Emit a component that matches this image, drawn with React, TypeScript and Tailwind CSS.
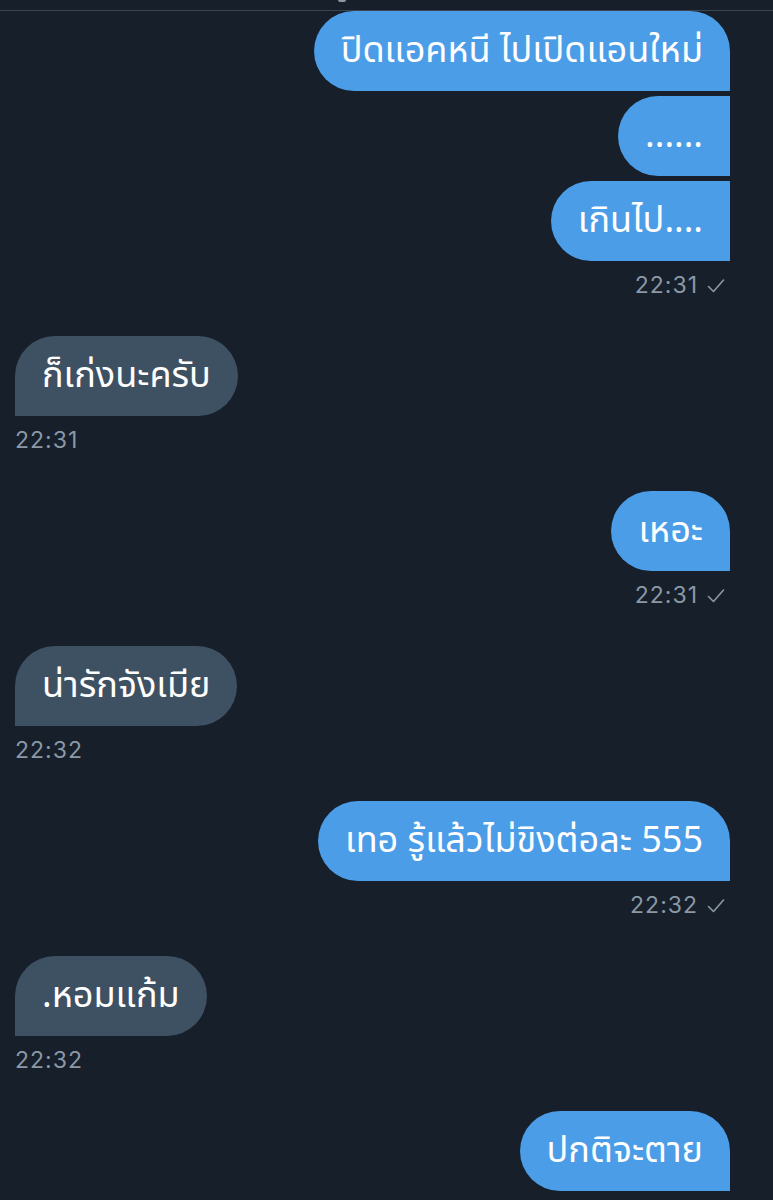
import React from "react";

type Msg = { texts: string[]; time: string; mine: boolean };

const msgs: Msg[] = [
  { texts: ["ปิดแอคหนี ไปเปิดแอนใหม่", "......", "เกินไป...."], time: "22:31", mine: true },
  { texts: ["ก็เก่งนะครับ"], time: "22:31", mine: false },
  { texts: ["เหอะ"], time: "22:31", mine: true },
  { texts: ["น่ารักจังเมีย"], time: "22:32", mine: false },
  { texts: ["เทอ รู้แล้วไม่ขิงต่อละ 555"], time: "22:32", mine: true },
  { texts: [".หอมแก้ม"], time: "22:32", mine: false },
  { texts: ["ปกติจะตาย"], time: "", mine: true },
];

function Check() {
  return (
    <svg width="18" height="14" viewBox="0 0 18 14" className="ml-[9px] mt-[1px]">
      <path d="M1.5 7.5 L6.5 12.5 L16.5 1" fill="none" stroke="#8b98a5" strokeWidth="1.6" strokeLinecap="round" strokeLinejoin="round" />
    </svg>
  );
}

export default function App() {
  return (
    <div
      className="w-[773px] h-[1200px] overflow-hidden bg-[#161f2a] flex flex-col"
      style={{ fontFamily: '"Noto Sans Thai", "Noto Sans", Inter, sans-serif' }}
    >
      <div className="h-[11px] shrink-0 border-b border-[#3a4550] flex items-start">
        <span className="ml-[338px] w-[8px] h-[2px] rounded-b-full bg-[#8b98a5]" />
      </div>
      <div className="flex flex-col pl-[15px] pr-[43px]">
        {msgs.map((m, i) => (
          <div key={i} className={`flex flex-col mb-[39px] ${m.mine ? "items-end" : "items-start"}`}>
            <div className={`flex flex-col gap-[5px] ${m.mine ? "items-end" : "items-start"}`}>
              {m.texts.map((t, j) => {
                const first = j === 0;
                const shape = m.mine
                  ? first
                    ? "rounded-l-[40px] rounded-tr-[40px]"
                    : "rounded-l-[40px]"
                  : first
                  ? "rounded-r-[40px] rounded-tl-[40px]"
                  : "rounded-r-[40px]";
                return (
                  <div
                    key={j}
                    className={`h-[80px] px-[27px] flex items-center text-white text-[36px] leading-none whitespace-nowrap ${shape} ${
                      m.mine ? "bg-[#4b9de8]" : "bg-[#3e5163]"
                    }`}
                  >
                    {t}
                  </div>
                );
              })}
            </div>
            {m.time && (
              <div
                className={`mt-[12px] h-[24px] flex items-center text-[23px] tracking-[1px] leading-[24px] text-[#8b98a5] ${
                  m.mine ? "pr-[5px]" : ""
                }`}
                style={{ fontFamily: "Inter, sans-serif" }}
              >
                <span>{m.time}</span>
                {m.mine && <Check />}
              </div>
            )}
          </div>
        ))}
      </div>
    </div>
  );
}
